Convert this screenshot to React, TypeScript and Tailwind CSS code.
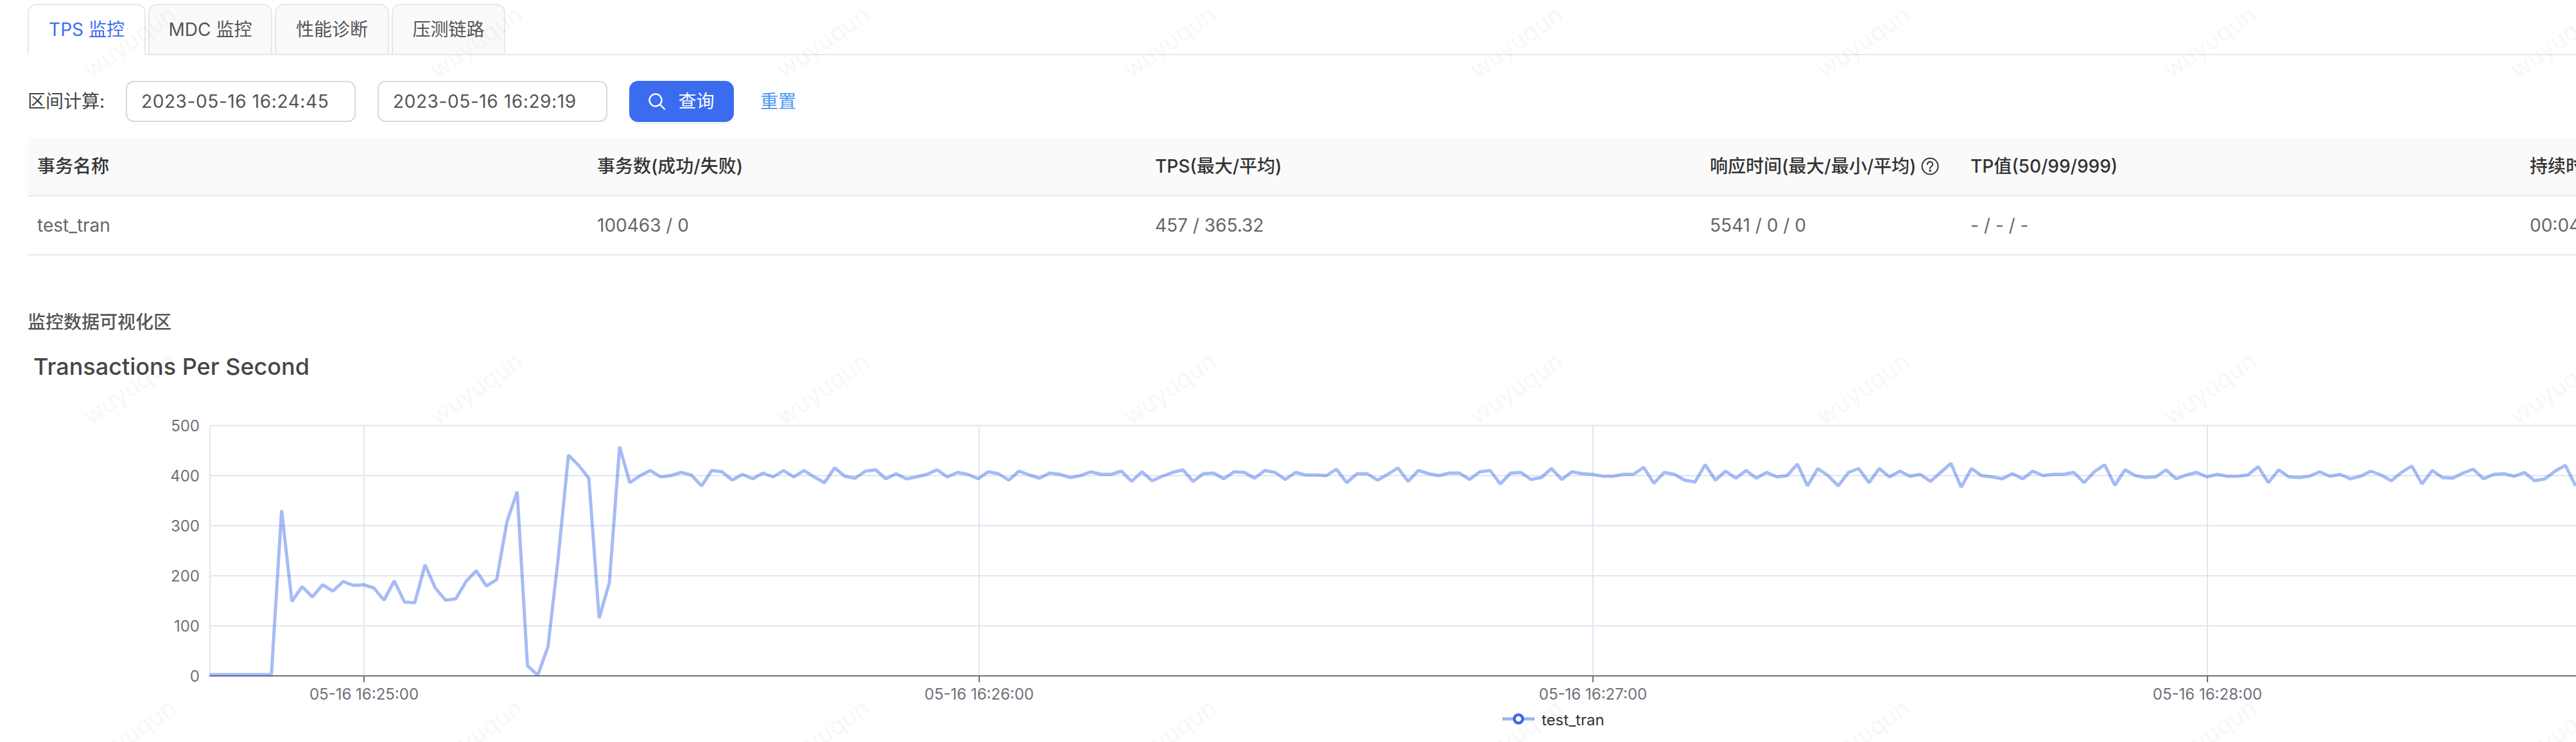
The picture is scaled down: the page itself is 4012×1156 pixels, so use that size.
const LINE_COLOR = "#3a68e8";

// Traced series: y pixel in the plot for each sample.
const head: number[] = [1051,1051,1051,1051,1051,1051,1051,795,937,914,930,911,921,906,912,911,916,935,905,938,939,880,916,935,933,906,889,913,903,813,766,1037,1052,1008,870,709,725,745,963,908,696,752,741];
const fromZoom5: number[] = [733,743,741,736,740,757,733,735,748,739,746,737,743,733,743,733,743,752,729,742,745,734,732,746,738,746,743,739,732,743,736,739,746,735,738,748,734,740,745,737,739,744,741,735,739,739,734,750,735,749,742,736,732,750,738,737,746,735,736,745,733,736,747,736,740,740,741];
const fromZoom6: number[] = [731,752,738,738,748,739,729,750,733,738,741,737,737,747,735,733,754,737,736,747,744,730,747,735,738,739,742,742,739,739,728,753,736,739,748,751,724,748,734,745,733,745,736,743,741,723,757,730,741,757,736,730,752,730,743,734,742,739,750,736,722];
const fromZoom7: number[] = [759,730,741,743,746,738,746,734,741,739,739,736,752,735,724,756,732,741,744,743,732,746,740,736,743,739,742,742,740,727,752,732,743,744,742,735,742,739,746,742,734,740,749,736,726,754,733,744,745,737,731,746,739,738,742,736,749,746,734,725,757];
const ys = [...head, ...fromZoom5, ...fromZoom6, ...fromZoom7];
const PLOT_LEFT = 327;
const STEP = 15.95;
const points = ys.map((y, i) => `${(PLOT_LEFT + i * STEP).toFixed(1)},${y}`).join(" ");

const gridYs = [663, 741, 819, 897, 975];
const yLabels: [string, number][] = [["500", 663], ["400", 741], ["300", 819], ["200", 897], ["100", 975], ["0", 1053]];
const xTicks: [string, number][] = [["05-16 16:25:00", 567], ["05-16 16:26:00", 1525], ["05-16 16:27:00", 2481], ["05-16 16:28:00", 3438]];

const tabs = [
  { label: "TPS 监控", w: "w-[184px]", active: true },
  { label: "MDC 监控", w: "w-[193px]", active: false },
  { label: "性能诊断", w: "w-[178px]", active: false },
  { label: "压测链路", w: "w-[177px]", active: false },
];

const columns = [
  { head: "事务名称", cell: "test_tran", w: "w-[872px]" },
  { head: "事务数(成功/失败)", cell: "100463 / 0", w: "w-[869px]" },
  { head: "TPS(最大/平均)", cell: "457 / 365.32", w: "w-[864px]" },
  { head: "响应时间(最大/最小/平均)", cell: "5541 / 0 / 0", w: "w-[406px]", help: true },
  { head: "TP值(50/99/999)", cell: "- / - / -", w: "w-[871px]" },
  { head: "持续时间", cell: "00:04:34", w: "w-[300px]" },
];

const FONT = "font-['Inter','Noto_Sans_CJK_SC',sans-serif]";

function Watermarks() {
  const cols = [0, 1, 2, 3, 4, 5, 6, 7];
  const rows = [0, 1, 2];
  return (
    <div className="absolute inset-0 pointer-events-none overflow-hidden">
      {rows.map((r) =>
        cols.map((c) => (
          <span
            key={`${r}-${c}`}
            className="absolute w-[170px] h-[46px] leading-[46px] text-center text-[38px] font-['Inter',sans-serif] text-black/[0.05] -rotate-[35deg] origin-center whitespace-nowrap"
            style={{ left: 116 + c * 540, top: 42 + r * 540 }}
          >
            wuyuqun
          </span>
        ))
      )}
    </div>
  );
}

function Chart() {
  return (
    <svg className="block w-[4012px] h-[560px]" viewBox="0 596 4012 560">
      {gridYs.map((y) => (
        <line key={y} x1={PLOT_LEFT} x2={4012} y1={y} y2={y} stroke="#E0E6F1" strokeWidth={2} />
      ))}
      {[PLOT_LEFT, ...xTicks.map((t) => t[1])].map((x) => (
        <line key={x} x1={x} x2={x} y1={663} y2={1053} stroke="#E0E6F1" strokeWidth={2} />
      ))}
      <line x1={PLOT_LEFT - 1} x2={4012} y1={1053} y2={1053} stroke="#6E7079" strokeWidth={2} />
      {xTicks.map(([, x]) => (
        <line key={x} x1={x} x2={x} y1={1053} y2={1063} stroke="#6E7079" strokeWidth={2} />
      ))}
      {yLabels.map(([t, y]) => (
        <text key={t} x={311} y={y + 9} textAnchor="end" fontSize={24} fill="#6E7079" fontFamily="Inter, sans-serif">
          {t}
        </text>
      ))}
      {xTicks.map(([t, x]) => (
        <text key={t} x={x} y={1090} textAnchor="middle" fontSize={24} fill="#6E7079" fontFamily="Inter, sans-serif">
          {t}
        </text>
      ))}
      <polyline points={points} fill="none" stroke={LINE_COLOR} strokeOpacity={0.45} strokeWidth={5} strokeLinejoin="bevel" />
      <line x1={2340} x2={2390} y1={1120} y2={1120} stroke={LINE_COLOR} strokeOpacity={0.5} strokeWidth={5} />
      <circle cx={2365} cy={1120} r={6.5} fill="#fff" stroke="#3f6bdc" strokeWidth={4.5} />
      <text x={2401} y={1130} fontSize={24} fill="#333" fontFamily="Inter, sans-serif">
        test_tran
      </text>
    </svg>
  );
}

export default function App() {
  return (
    <div className={`relative w-[4012px] h-[1156px] overflow-hidden bg-white ${FONT}`}>
      <Watermarks />
      <div className="pt-[6px] pl-[43px]">
        {/* Tabs */}
        <div className="flex gap-[4px] h-[80px] border-b-2 border-[#e8e8e8]">
          {tabs.map((t) => (
            <div
              key={t.label}
              className={`${t.w} h-[80px] flex items-center justify-center rounded-t-[14px] border-2 text-[28px] ${
                t.active
                  ? "border-[#e8e8e8] border-b-white bg-white text-[#3a6df0]"
                  : "border-[#e8e8e8] bg-[#fafafa] text-[#555]"
              }`}
            >
              {t.label}
            </div>
          ))}
        </div>

        {/* Filter */}
        <div className="flex items-center h-[64px] mt-[40px] text-[28px]">
          <span className="w-[153px] text-[#444]">区间计算:</span>
          <div className="w-[358px] h-[64px] flex items-center pl-[22px] rounded-[12px] border-2 border-[#d9d9d9] bg-white text-[#555] tracking-[0.6px]">
            2023-05-16 16:24:45
          </div>
          <div className="w-[358px] h-[64px] flex items-center pl-[22px] ml-[34px] rounded-[12px] border-2 border-[#d9d9d9] bg-white text-[#555] tracking-[0.6px]">
            2023-05-16 16:29:19
          </div>
          <button className="w-[163px] h-[64px] ml-[34px] flex items-center justify-center gap-[20px] rounded-[14px] bg-[#3b6cf0] text-white shadow-[0_4px_0_rgba(0,0,0,0.04)]">
            <svg width="26" height="26" viewBox="0 0 26 26" fill="none" stroke="currentColor" strokeWidth="2.4" strokeLinecap="round">
              <circle cx="11" cy="11" r="9.5" />
              <path d="M18 18 25 25" />
            </svg>
            查询
          </button>
          <span className="ml-[41px] text-[#4a96f7]">重置</span>
        </div>

        {/* Table */}
        <div className="mt-[24px] w-[4300px] text-[28px]">
          <div className="flex h-[92px] bg-[#fafafa] border-b-2 border-[#e8e8e8] items-center font-medium text-[#333]">
            {columns.map((c) => (
              <div key={c.head} className={`${c.w} shrink-0 pl-[15px] flex items-center gap-[8px] whitespace-nowrap`}>
                {c.head}
                {c.help && (
                  <svg width="28" height="28" viewBox="0 0 28 28" fill="none" stroke="#333" strokeWidth="2">
                    <circle cx="14" cy="14" r="12.5" />
                    <path d="M10 11a4 4 0 1 1 6 3.4c-1.300.8-2 1.500-2 3" strokeLinecap="round" />
                    <circle cx="14" cy="21" r="0.8" fill="#333" />
                  </svg>
                )}
              </div>
            ))}
          </div>
          <div className="flex h-[92px] border-b-2 border-[#e8e8e8] items-center text-[#666]">
            {columns.map((c) => (
              <div key={c.head} className={`${c.w} shrink-0 pl-[15px] whitespace-nowrap`}>
                {c.cell}
              </div>
            ))}
          </div>
        </div>

        <div className="mt-[86px] text-[28px] leading-[36px] font-medium text-[#555]">监控数据可视化区</div>
      </div>

      <h2 className="ml-[52px] mt-[28px] text-[36px] leading-[46px] font-medium text-[#464646]">
        Transactions Per Second
      </h2>

      <div className="mt-[2px]">
        <Chart />
      </div>
    </div>
  );
}
